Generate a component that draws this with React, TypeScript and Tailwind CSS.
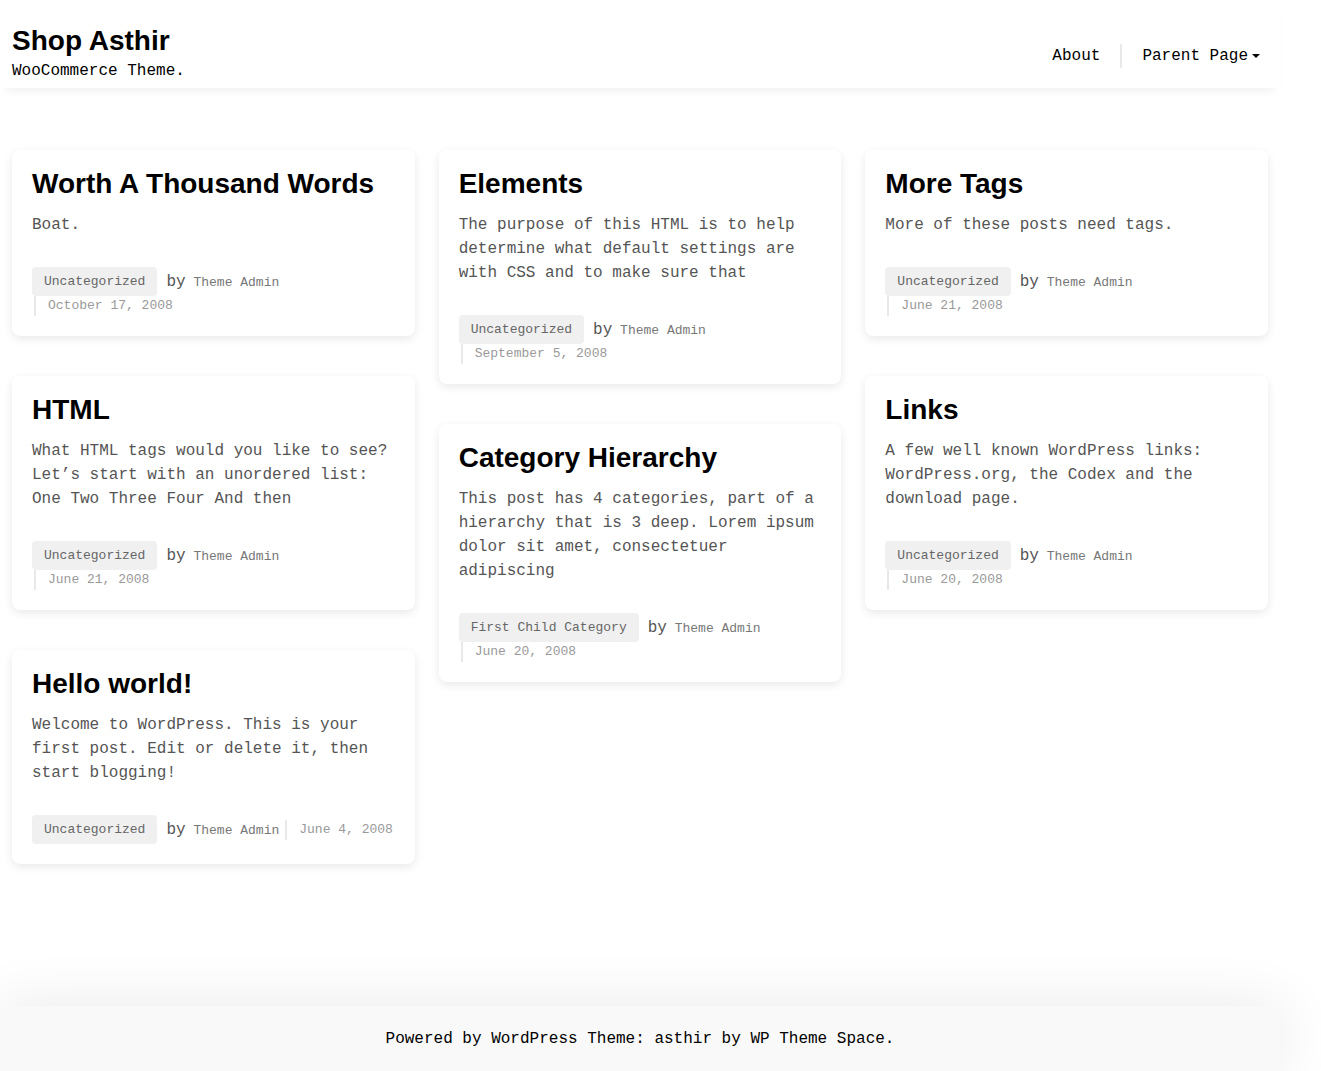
type Post = {
  title: string;
  excerpt: string;
  category: string;
  date: string;
};

// posts laid out by column, as the masonry grid shows them
const columns: Post[][] = [
  [
    {
      title: 'Worth A Thousand Words',
      excerpt: 'Boat.',
      category: 'Uncategorized',
      date: 'October 17, 2008',
    },
    {
      title: 'HTML',
      excerpt: 'What HTML tags would you like to see? Let’s start with an unordered list: One Two Three Four And then',
      category: 'Uncategorized',
      date: 'June 21, 2008',
    },
    {
      title: 'Hello world!',
      excerpt: 'Welcome to WordPress. This is your first post. Edit or delete it, then start blogging!',
      category: 'Uncategorized',
      date: 'June 4, 2008',
    },
  ],
  [
    {
      title: 'Elements',
      excerpt: 'The purpose of this HTML is to help determine what default settings are with CSS and to make sure that',
      category: 'Uncategorized',
      date: 'September 5, 2008',
    },
    {
      title: 'Category Hierarchy',
      excerpt: 'This post has 4 categories, part of a hierarchy that is 3 deep. Lorem ipsum dolor sit amet, consectetuer adipiscing',
      category: 'First Child Category',
      date: 'June 20, 2008',
    },
  ],
  [
    {
      title: 'More Tags',
      excerpt: 'More of these posts need tags.',
      category: 'Uncategorized',
      date: 'June 21, 2008',
    },
    {
      title: 'Links',
      excerpt: 'A few well known WordPress links: WordPress.org, the Codex and the download page.',
      category: 'Uncategorized',
      date: 'June 20, 2008',
    },
  ],
];

const mono = "font-['Liberation_Mono',monospace]";
const sans = "font-['Liberation_Sans',Arial,sans-serif]";

function PostCard({ post }: { post: Post }) {
  return (
    <article className="rounded-lg bg-white p-5 shadow-[0_3px_10px_rgba(0,0,0,0.09)]">
      <h2 className={`${sans} text-[28px] font-bold leading-[28px] text-black`}>{post.title}</h2>
      <p className={`${mono} mt-[15px] text-base leading-6 text-[#555]`}>{post.excerpt}</p>
      <div className={`${mono} mt-[30px] -ml-[4px] flex flex-wrap items-center text-[13px]`}>
        <a className="ml-[4px] rounded bg-[#f0f0f0] px-3 leading-[29px] text-[#666]">{post.category}</a>
        <span className="ml-[9px] whitespace-nowrap text-[#777]">
          <span className="text-base text-[#555]">by</span> Theme Admin
        </span>
        <span className="ml-[6px] border-l-2 border-[#e8e8e8] pl-3 leading-5 text-[#999]">{post.date}</span>
      </div>
    </article>
  );
}

export default function App() {
  return (
    <div className="min-h-screen bg-white">
      <div className="w-[1280px]">
        <header className="flex items-center justify-between bg-white pb-[7px] pl-3 pt-6 shadow-[0_8px_10px_-6px_rgba(0,0,0,0.07)]">
          <div>
            <h1 className={`${sans} text-[28px] font-bold leading-[34px] text-black`}>Shop Asthir</h1>
            <p className={`${mono} mt-[3px] text-base leading-5 text-black`}>WooCommerce Theme.</p>
          </div>
          <nav className={`${mono} mt-[7px] flex text-base leading-6 text-black`}>
            <a className="px-5">About</a>
            <a className="flex items-center border-l-2 border-[#e8e8e8] pl-5 pr-5">
              Parent Page
              <svg className="ml-1" width="8" height="4" viewBox="0 0 8 4">
                <path d="M0 0h8L4 4z" fill="#000" />
              </svg>
            </a>
          </nav>
        </header>

        <main className="grid grid-cols-3 items-start gap-6 px-3 pb-[142px] pt-[62px]">
          {columns.map((col, i) => (
            <div key={i} className="flex flex-col gap-10">
              {col.map((post) => (
                <PostCard key={post.title} post={post} />
              ))}
            </div>
          ))}
        </main>

        <footer className={`${mono} bg-[#f9f9f9] py-6 text-center text-base leading-[18px] text-black shadow-[0_0_60px_rgba(0,0,0,0.09)]`}>
          Powered by WordPress Theme: asthir by WP Theme Space.
        </footer>
      </div>
    </div>
  );
}
